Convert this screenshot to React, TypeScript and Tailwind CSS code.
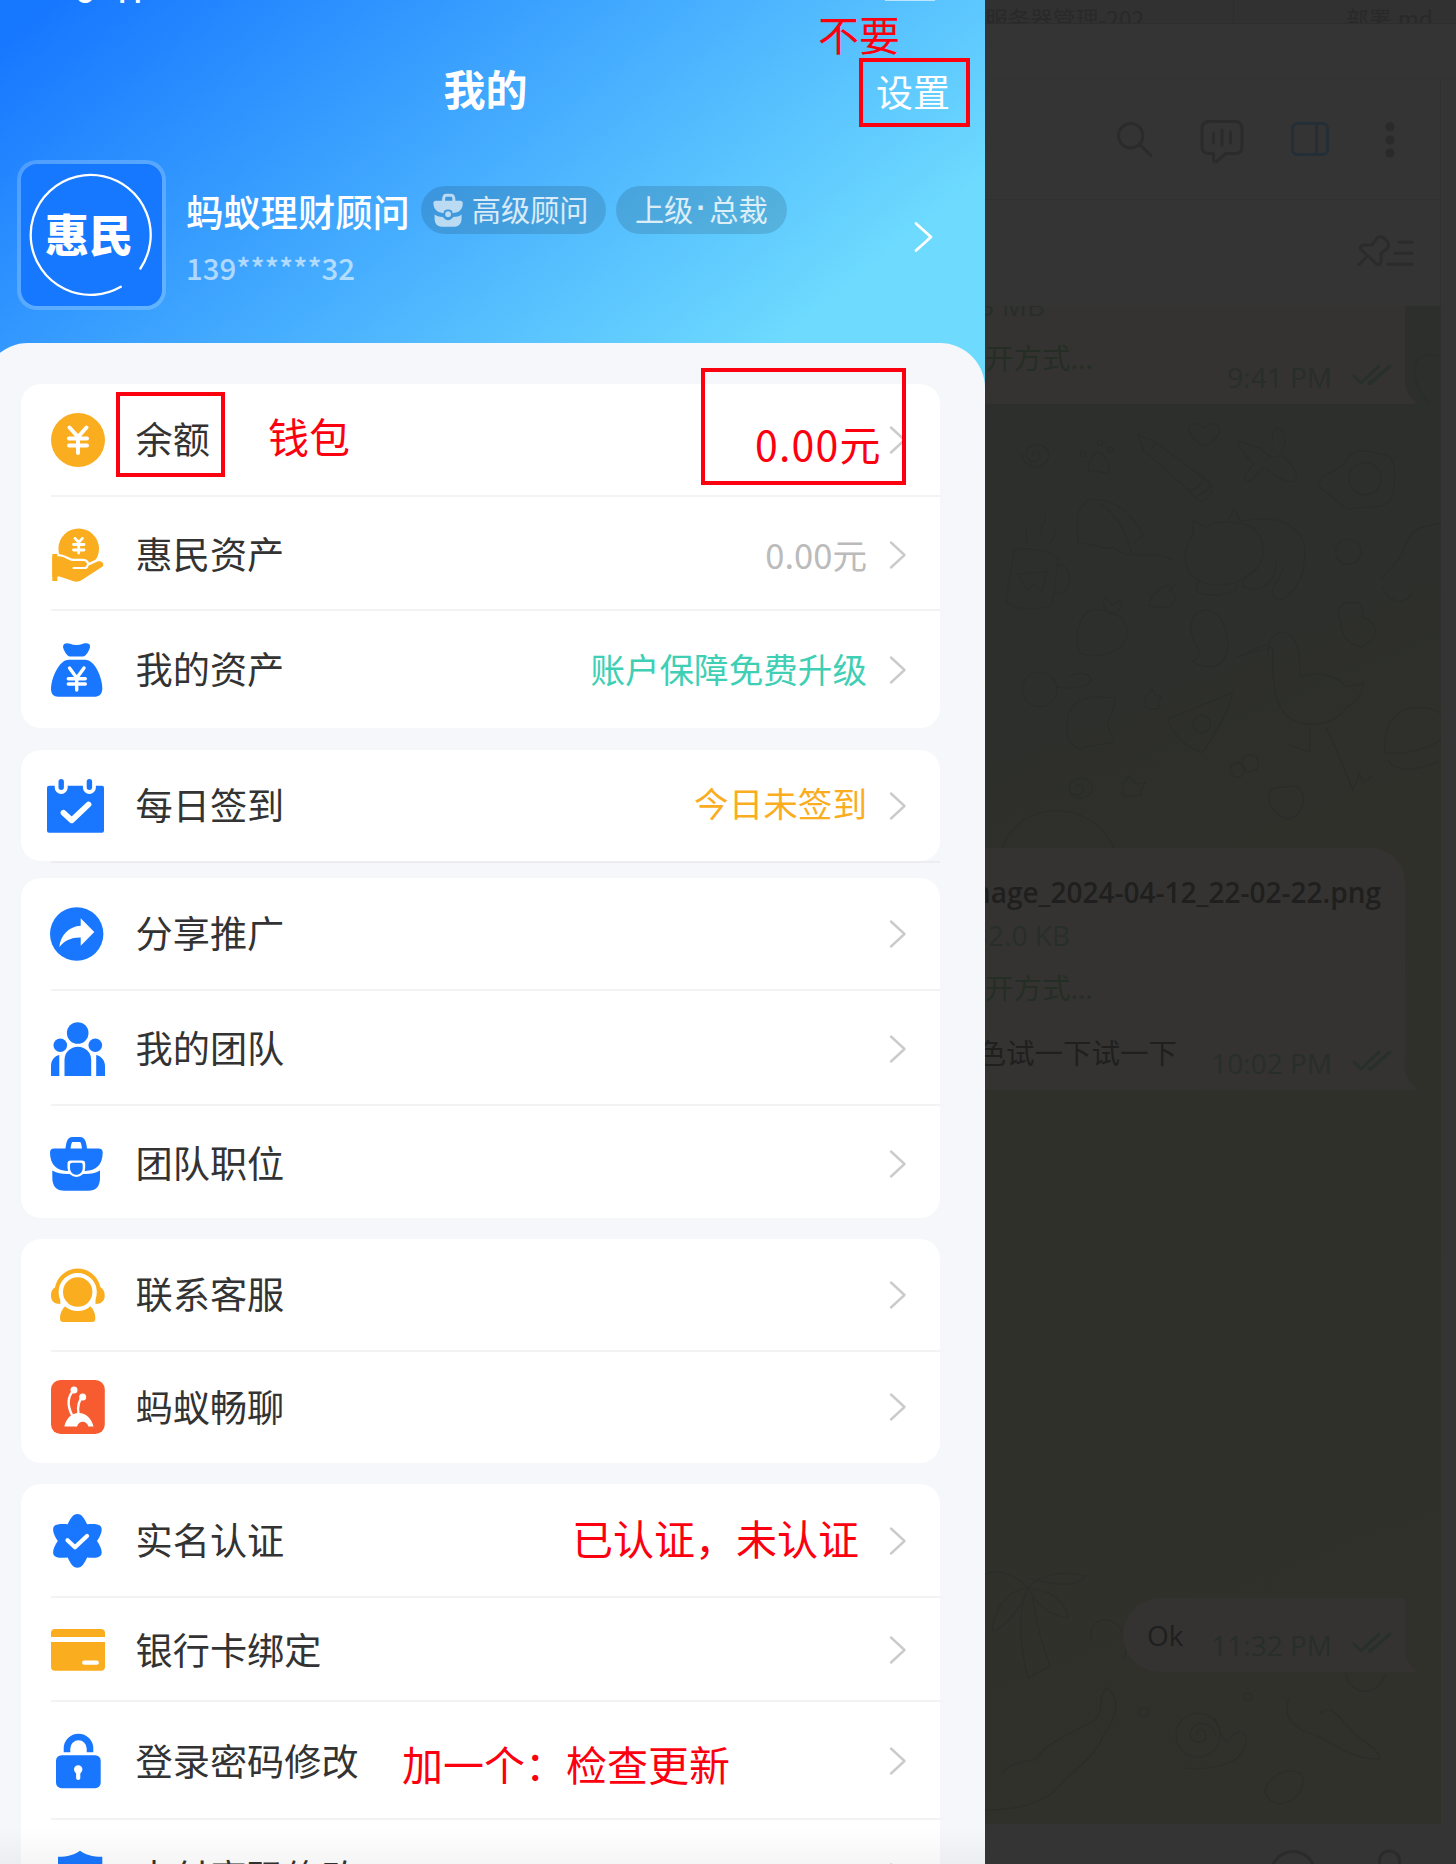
import type { ReactNode } from "react";

const BLUE = "#1977ff";
const AMBER = "#faad1e";
const cjk = "font-['Noto_Sans_CJK_SC',sans-serif]";

function Glyph({ children }: { children: ReactNode }) {
  return (
    <svg width="60" height="60" viewBox="0 0 60 60" fill="none" strokeLinecap="round" strokeLinejoin="round" className="shrink-0">
      {children}
    </svg>
  );
}

const icons: Record<string, ReactNode> = {
  yen: (
    <Glyph>
      <circle cx="31" cy="30" r="27" fill={AMBER} />
      <path d="M22.5 17.5 31 27l8.5-9.5M31 27v16M22 28.6h18M22 35.4h18" stroke="#fff" strokeWidth="4" />
    </Glyph>
  ),
  hand: (
    <Glyph>
      <circle cx="31.7" cy="23.8" r="20.3" fill={AMBER} />
      <path d="M28 13.4l3.7 4 3.7-4M31.7 17.5V28M26.5 19.5h10.5M26.5 25h10.5" stroke="#fff" strokeWidth="2.8" />
      <path d="M5.3 31.2h6C17 31 21 35.400 26 36h10c3 0 4.500 2 4.300 5.200L50 36.700c3-1.500 7.500.5 6 4-.4 1-1.200 1.500-2.300 2L34 55.600c-2 1.200-5 1.400-8 .4L12.500 51.400 5.300 51.500z" stroke="#fff" strokeWidth="4.600" />
      <path d="M5.3 31.2h6C17 31 21 35.400 26 36h10c3 0 4.500 2 4.300 5.200L50 36.700c3-1.500 7.500.5 6 4-.4 1-1.200 1.500-2.300 2L34 55.600c-2 1.200-5 1.400-8 .4L12.500 51.400 5.300 51.500z" fill={AMBER} />
      <path d="M5.300 29h5v27h-5z" fill={AMBER} />
      <path d="M26.500 43h11c1.700 0 2.700-1 2.900-2.500" stroke="#fff" strokeWidth="2" />
    </Glyph>
  ),
  bag: (
    <Glyph>
      <path d="M16 7c0-4 4-4.200 7-3.200 4 1.600 9 1.600 13 0 3.500-1 7.500-.5 7 3.200-.4 3-4 9.500-7 9.500H23C20 16.500 16.500 10 16 7z" fill={BLUE} />
      <path d="M22 19.800h16c10 0 17.300 18 17.300 29 0 5-3 7.900-7 7.900H11c-4.500 0-7-2.700-7-7.900 0-9.500 7.500-29 18-29z" fill={BLUE} />
      <path d="M22.500 28l7.300 10 7.200-10M29.700 38v12M21.300 38.800h17M21.300 44h17" stroke="#fff" strokeWidth="3.400" />
    </Glyph>
  ),
  calendar: (
    <Glyph>
      <rect x="0" y="9.700" width="57" height="47" rx="2" fill={BLUE} />
      <path d="M14.200 4v7.500M42.400 4v7.500" stroke="#fff" strokeWidth="13" />
      <path d="M14.200 5.800v5.500M42.400 5.800v5.500" stroke={BLUE} strokeWidth="5.400" />
      <path d="M16.500 36.800l8.200 7.500L41.500 28.500" stroke="#fff" strokeWidth="5.800" />
    </Glyph>
  ),
  share: (
    <Glyph>
      <circle cx="29.700" cy="30" r="26.700" fill={BLUE} />
      <path d="M33.700 14.200L47.300 28 33.700 41.700v-8.200c-9-.3-16.500 3-21.400 9.800C13.500 31 22 22.500 33.700 21.800z" fill="#fff" />
    </Glyph>
  ),
  team: (
    <Glyph>
      <g fill={BLUE}>
        <circle cx="30.700" cy="14" r="10.800" />
        <circle cx="13.300" cy="26.200" r="6.800" />
        <circle cx="48.300" cy="26.200" r="6.800" />
        <path d="M17.500 57V41a13.300 13.300 0 0 1 26.700 0v16zM4 57V47c0-5.500 3.500-10 8.300-11V57zM49.200 57V36C54 37 58 41.500 58 47v10z" />
      </g>
    </Glyph>
  ),
  briefcase: (
    <Glyph>
      <path d="M20.800 15.500c1-7 1.600-10 4.600-10h7.600c3 0 3.800 3 4.600 10" stroke={BLUE} strokeWidth="5" />
      <path d="M3 18.500c0-2.500 1.500-4 4-4h44.700c2.500 0 4 1.500 4 4C55.700 31 49 36.500 38 37H20C10 36.500 3 31 3 18.500z" fill={BLUE} />
      <path d="M5.300 36.500c5 2.600 9 3.400 15 3.600h18c6-.2 10-1 14.700-3.600v7c0 9-4 13.200-12 13.200H17.500c-8 0-12.200-4.200-12.200-13.200z" fill={BLUE} />
      <path d="M23.500 29h11.400c.5 0 .8.300.8.800V34c0 4-3 6.500-6.300 6.500S23 38 23 34v-4.200c0-.5.200-.8.500-.8z" fill="#fff" stroke="#fff" strokeWidth="5" />
      <path d="M25.500 28.700h8c1.500 0 2.200.8 2.200 2.200V34c0 4-3 6.800-6.300 6.800S23 38 23 34v-3.100c0-1.400.9-2.200 2.500-2.200z" fill={BLUE} />
    </Glyph>
  ),
  headset: (
    <Glyph>
      <path d="M10.500 23a20.500 20.500 0 0 1 40.400 0" stroke={AMBER} strokeWidth="5" />
      <path d="M13.300 20.500V39C7 39 4 36 4 30.500S7 21.500 13.300 20.500zM48.500 20.500c6.200 1 9.200 4.500 9.200 10S54.500 39 48.500 39z" fill={AMBER} />
      <path d="M19 40.500h23.500c4 3.500 5.800 7.500 5.800 12.500 0 3-1 4-3.500 4H16.500c-2.500 0-3.500-1-3.500-4 0-5 2-9 6-12.500z" fill={AMBER} />
      <circle cx="30.700" cy="27" r="16.900" fill={AMBER} stroke="#fff" strokeWidth="4.400" />
    </Glyph>
  ),
  ant: (
    <Glyph>
      <rect x="4" y="3" width="53.800" height="54" rx="9.500" fill="#f75c30" />
      <path d="M27 13c-6 6-7 15-2 25M35.700 20c-4.500 4-5.500 9-4.200 17" stroke="#fff" strokeWidth="2.400" />
      <circle cx="27" cy="13" r="3.500" fill="#fff" />
      <circle cx="35.700" cy="20" r="3.500" fill="#fff" />
      <path d="M17.300 49.400c2-8 7-13.400 14.500-13.400s13 6 14.700 13.400h-5.200c-1.600-6.200-9.600-6.200-11.200 0z" fill="#fff" />
    </Glyph>
  ),
  badge: (
    <Glyph>
      <path d="M30.400 3c4.500 0 7.300 5 9.700 10.300 7-.6 13.400-.4 14.400 3.600.9 4-1.600 8.600-4.500 13 2.900 4.400 5.400 9 4.500 13-1 4-7.400 4.200-14.400 3.600C37.700 51.800 34.900 56.800 30.400 56.800S23.100 51.800 20.700 46.500C13.700 47.100 7.300 46.900 6.300 42.900c-.9-4 1.600-8.600 4.500-13-2.900-4.400-5.400-9-4.500-13 1-4 7.400-4.200 14.400-3.600C23.100 8 25.900 3 30.400 3z" fill={BLUE} />
      <path d="M20.500 29.200l7.500 7 12-11.200" stroke="#fff" strokeWidth="4.200" />
    </Glyph>
  ),
  card: (
    <Glyph>
      <path d="M4 17v-4c0-2.500 1.500-4 4-4h46c2.500 0 4 1.500 4 4v4zM4 22h54v24.700c0 2.500-1.500 4-4 4H8c-2.500 0-4-1.500-4-4z" fill={AMBER} />
      <path d="M37.200 42.700h12.600" stroke="#fff" strokeWidth="4.200" />
    </Glyph>
  ),
  lock: (
    <Glyph>
      <path d="M20 21.200V17.500a11.500 11.500 0 0 1 23 0v3.700" stroke={BLUE} strokeWidth="6.600" strokeLinecap="butt" />
      <rect x="9" y="24.200" width="44.700" height="33" rx="5.500" fill={BLUE} />
      <circle cx="31.200" cy="38.500" r="4.200" fill="#fff" />
      <path d="M31.200 39v8" stroke="#fff" strokeWidth="4.200" />
    </Glyph>
  ),
  shield: (
    <Glyph>
      <path d="M33 3.700C39 8 45 9.700 55.300 9.700V32c0 12-9 19-22.300 25C20 51 11 44 11 32V9.700C21 9.700 27 8 33 3.700z" fill={BLUE} />
    </Glyph>
  ),
};

function Chevron() {
  return (
    <svg width="18" height="30" viewBox="0 0 18 30" fill="none" className="shrink-0">
      <path d="M2 2.500L15.500 15 2 27.500" stroke="#cbcbcb" strokeWidth="2.400" strokeLinecap="round" strokeLinejoin="round" />
    </svg>
  );
}

type RowProps = { icon: string; label: string; size: string; value?: string; tone?: string; divider?: boolean };

function Row({ icon, label, size, value, tone = "", divider }: RowProps) {
  return (
    <div className={`relative flex items-center pl-[26.500px] pr-[33px] ${size}`}>
      {icons[icon]}
      <span className="ml-[28.500px] pb-px text-[37.200px] leading-none whitespace-nowrap text-[#333]">{label}</span>
      <span className={`mr-[22px] ml-auto text-[34.600px] leading-none whitespace-nowrap ${tone}`}>{value}</span>
      <Chevron />
      {divider && <span className="absolute right-[-1px] bottom-0 left-[30px] h-[2px] bg-[#f3f3f4]" />}
    </div>
  );
}

function Card({ children, className = "" }: { children: ReactNode; className?: string }) {
  return <section className={`rounded-[20px] bg-white ${className}`}>{children}</section>;
}

function PhoneHeader() {
  return (
    <header className="relative h-[400px] overflow-hidden bg-[linear-gradient(141deg,#1677ff_30px,#6ddafe_757px)] text-white">
      <div className="absolute top-[-28px] left-[75px] font-['Inter',sans-serif] text-[34px] leading-[38px] font-medium">9:41</div>
      <div className="absolute top-0 left-[885px] h-px w-[50px] bg-white/60" />
      <div className="grid h-[160px] grid-cols-[1fr_auto_1fr] items-start pt-[67px] pr-[49px] pl-[35px]">
        <span />
        <h1 className="text-[42px] leading-[42px] font-bold">我的</h1>
        <span className="-mr-[14px] justify-self-end pt-[6px] text-[37px] leading-[37px]">设置</span>
      </div>
      <div className="flex pl-[16.500px]">
        <div className="flex h-[150px] w-[149px] items-center justify-center rounded-[20px] border-4 border-white/20 bg-[#1677ff] bg-clip-padding">
          <svg width="141" height="142" viewBox="0 0 141 142" fill="none" className="absolute">
            <path d="M119.400 104.500A60 60 0 1 0 99.800 122.800" stroke="#fff" strokeWidth="2.300" strokeLinecap="round" />
          </svg>
          <span className="pr-[4px] pb-[5px] text-[44px] leading-none font-black">惠民</span>
        </div>
        <div className="ml-[20.500px] pt-[26px]">
          <div className="flex items-center">
            <span className="pt-[3px] text-[37.300px] leading-[45px] font-medium">蚂蚁理财顾问</span>
            <div className="ml-[11px] flex h-[48px] w-[185px] items-center rounded-full bg-black/[0.13] pl-[10px] text-white/80">
              <svg width="36" height="36" viewBox="0 0 60 60" fill="none" className="opacity-65">
                <path d="M21 15c0-7 .8-9.400 4-9.400h9c3.200 0 4.200 2.400 4.200 9.400" stroke="#fff" strokeWidth="5" />
                <path d="M4 18.500c0-2.500 1.500-4 4-4h41c2.500 0 4 1.500 4 4C53 29 47 35 36 35.300c0-4-2-6-7.500-6s-7.500 2-7.500 6C11 35 4 29 4 18.500z" fill="#fff" />
                <path d="M6 37.500c5 3.200 9 4 14 4.200 2 3.300 5 5.300 8.500 5.300s6.500-2 8.500-5.300c6-.2 10-1 14-4.200v6c0 9-4 14.500-12 14.500H18c-8 0-12-5.500-12-14.500z" fill="#fff" />
                <circle cx="28.500" cy="37" r="4.800" fill="#fff" />
              </svg>
              <span className="ml-[5px] pb-[2px] text-[29.200px] leading-none whitespace-nowrap">高级顾问</span>
            </div>
            <div className="ml-[10px] flex h-[48px] w-[171px] items-center justify-center rounded-full bg-black/[0.13] pb-[2px] text-[29.200px] leading-none text-white/80">
              <span>上级</span>
              <span className="w-[16px] text-center font-['Liberation_Sans',sans-serif] font-bold">·</span>
              <span>总裁</span>
            </div>
          </div>
          <div className="mt-[16px] text-[29.400px] leading-[34px] font-medium text-white/60">139******32</div>
        </div>
        <svg width="22" height="34" viewBox="0 0 22 34" fill="none" className="mt-[60px] mr-[50px] ml-auto">
          <path d="M3 3.500L18 17 3 30.500" stroke="#fff" strokeWidth="2.800" strokeLinecap="round" strokeLinejoin="round" />
        </svg>
      </div>
    </header>
  );
}

function Phone() {
  return (
    <main className={`relative h-[1864px] w-[985px] shrink-0 overflow-hidden bg-[#f5f7fb] ${cjk}`}>
      <PhoneHeader />
      <div className="relative -mt-[57px] -ml-[17px] flex flex-col rounded-t-[45px] bg-[#f5f7fb] pt-[41px] pr-[45px] pl-[37.500px]">
        <Card>
          <Row icon="yen" label="余额" size="h-[113px] pb-[2px]" divider />
          <Row icon="hand" label="惠民资产" value="0.00元" tone="text-[#bbb]" size="h-[114px] pt-px" divider />
          <Row icon="bag" label="我的资产" value="账户保障免费升级" tone="pb-[3px] text-[#3fcfb4]" size="h-[117px]" />
        </Card>
        <Card className="mt-[22px]">
          <Row icon="calendar" label="每日签到" value="今日未签到" tone="pb-[7px] text-[#faad1e]" size="h-[111px]" />
        </Card>
        <div className="ml-[30px] h-[2px] bg-[#ededf0]" />
        <Card className="mt-[15px]">
          <Row icon="share" label="分享推广" size="h-[113px] pb-[2px]" divider />
          <Row icon="team" label="我的团队" size="h-[115px]" divider />
          <Row icon="briefcase" label="团队职位" size="h-[112px] pt-[3px]" />
        </Card>
        <Card className="mt-[21px]">
          <Row icon="headset" label="联系客服" size="h-[113px] pb-[2px]" divider />
          <Row icon="ant" label="蚂蚁畅聊" size="h-[111px] pb-px" />
        </Card>
        <Card className="mt-[21px]">
          <Row icon="badge" label="实名认证" size="h-[114px] pb-px" divider />
          <Row icon="card" label="银行卡绑定" size="h-[104px]" divider />
          <Row icon="lock" label="登录密码修改" size="h-[118px]" divider />
          <Row icon="shield" label="支付密码修改" size="h-[114px]" />
        </Card>
      </div>
      <div className="absolute inset-x-0 bottom-0 h-[36px] bg-linear-to-b from-transparent to-black/[0.04]" />
    </main>
  );
}

function Ticks() {
  return (
    <svg width="40" height="24" viewBox="0 0 40 24" fill="none" stroke="#27302b" strokeWidth="3" strokeLinecap="round" strokeLinejoin="round">
      <path d="M2 13l7 7L27 3M18 20.500L38 3M17 19l2 1.500" />
    </svg>
  );
}

function Stamp({ time, className = "bottom-[12px]" }: { time: string; className?: string }) {
  return (
    <div className={`absolute right-[13px] flex items-center text-[28px] leading-[30px] whitespace-nowrap text-[#282e2b] ${className}`}>
      <span className="mr-[20px]">{time}</span>
      <span className="mb-[4px]">
        <Ticks />
      </span>
    </div>
  );
}

function Tail() {
  return (
    <svg width="15" height="32" viewBox="0 0 15 32" className="absolute right-[-14px] bottom-0">
      <path d="M0 0C0 16 4 26 14.500 31c-3 1-8 1-14.500 1z" fill="#343331" />
    </svg>
  );
}

/* Wallpaper line drawings: desk objects, animals and fruit. */
function Doodles() {
  return (
    <svg width="456" height="1518" viewBox="985 306 456 1518" fill="none" stroke="#2b2d29" strokeWidth="1.200" className="absolute inset-0">
      <g transform="translate(985 400) scale(.33333)" stroke="#2a2c2a" strokeWidth="3.400">
        <path d="M145 165c-8-14 22-16 20 6-4 22-44 18-42-10 4-36 70-34 68 4-2 50-82 46-80-6" />
        <path d="M312 215c-6-20 4-30 14-54 18-8 26-2 34 10 4 16 16 26 14 40-20 18-30-6-62 4z" />
        <circle cx="294" cy="162" r="8" />
        <circle cx="376" cy="150" r="8" />
        <circle cx="345" cy="128" r="8" />
        <path d="M458 104l52 22 160 118c24 20 8 44-14 58-18 0-30-10-42-28L475 150zM500 150l14-26M610 270c26 0 44-20 44-46M630 290c30-8 44-26 44-40" />
        <path d="M660 138c-80-40-46-90-4-54 50-40 74 20 4 54zM758 124c30 4 50 20 68 20 16 20 40 40 60 20 20 16 50 40 50 76-30 20-70-20-96-36-20 0-34 50-56 38-16-10 14-40 24-50-20-20-44-40-50-68zM862 130c-4-60 36-60 38-10 0 20-6 28-14 34" />
        <path d="M1000 260c8-50 60-40 80-74 40-60 90-20 130-20 30 30 20 120 0 142-30 20-70 10-120 20-30-14-40-38-90-68z" />
        <circle cx="1140" cy="236" r="48" />
        <path d="M280 430c-10-80 0-110 32-132 90-4 130 50 164 108l-30 22M350 312c50 40 70 80 92 154M276 430c50-6 70 26 110 10 40 50 110 0 180 42" />
        <path d="M88 450l-26 150c20 34 120 32 140 10l18-134c-20-26-100-36-132-26zM218 494c50-4 50 100-12 86M96 522l90-8-14 60-26-20-20 16zM124 430c10-20-10-30 0-40M170 400c-10-26 20-30 8-56M192 430c20-10 14-30 18-50" />
        <path d="M624 404V362l38 20c40-22 90-20 140 0 60 50 40 170-100 172-90 0-130-70-78-150zM730 362l18-34 18 36c150-30 210 40 190 130-4 70-80 140-94 84 0-30 30-50 34-80M640 546c-30 40 40 50 114 26v-24M820 500c-20 20-60 30-44 60 50 20 100-10 98-84" />
        <path d="M284 760c-20-60 0-130 50-132 50 0 100 30 92 80-10 50-90 70-142 52zM358 590c-10 30 10 50 26 54 20-10 30-30 24-44l-26 16zM490 616c14-40 40-60 64-58 30 40 20 80-64 58zM550 575l24-26" />
        <path d="M618 690c-4-70 70-80 96-20 30 70 10 130-40 130-30-2-44-10-52-16 30-10 20-40 10-50-10-20-14-30-14-44z" />
        <path d="M850 770c-10-90 80-100 92-10l4 70c60-20 110 0 140 30l50-10c-10 40-20 60-50 70-40 70-170 70-200 0-30-60-20-120-24-180l-106 32 102-46M974 980v76l-60-20M1024 980l80 190 20-50 10 30 30-24" />
        <circle cx="164" cy="868" r="52" />
        <path d="M250 940c30-60 90-50 140-46 0 60-40 60-10 110 30 40-60 20-96 44-50-20-40-70-34-108zM215 860c40 10 100 0 104-20-10-30-60-20-64-8M548 958l194-80c-10 60-50 120-90 180-50-20-80-40-104-100z" />
        <circle cx="650" cy="972" r="26" />
        <circle cx="795" cy="1090" r="26" />
        <circle cx="758" cy="1110" r="22" />
        <path d="M478 920l4-30 20-24 8 20 20 2-12 22 8 14-24 4zM410 1180l4-30 20-24 18 26 30-4-16 24 4 14-50 4zM275 1165c-8-14 22-16 20 6-4 22-44 18-42-10 4-36 70-34 68 4-2 40-62 36-70 6" />
        <path d="M50 1344c60-150 270-150 336 0M850 1190c0-30 40-30 60-30 60-20 60 90 0 96-30 0-60-40-60-66zM1066 660c-20-30 10-60 30-50 40-10 40 20 34 40 50 20 60 60 0 92-50-10-60-40-64-82zM1200 1060c-10-160 120-150 168-120M1200 1060c50 0 100 0 168-40M1210 1080c20 40 100 30 150 4M1190 540c10-30 50-40 70-100 20-60 50-60 108-70M1190 560c30 60 80 50 90 20" />
        <circle cx="1090" cy="455" r="38" />
      </g>
      <path d="M1028 1588c-12-14-30-20-43-14M1028 1588c12-14 34-18 58-12-10 12-30 10-58 2M1028 1588c-20 2-34 20-36 44 14-6 30-24 36-44zM1028 1588c24 2 38 14 40 30-14-2-30-10-40-30M1026 1590c-8 30-6 56 2 88l22-12c-8-20-14-44-18-72" />
      <path d="M985 1810c30 0 60-6 76-26 20-20 34-28 42-48 14-18 18-38 4-48-10 6-2 24-12 32-20 12-46 20-60 40-16 2-26 4-34 14" />
      <circle cx="1198" cy="1735" r="22" />
      <path d="M1198 1735c-4-6 6-8 8 0 0 10-16 10-16-2 4-14 24-12 26 4M1184 1768c20 2 58 0 62-26 2-14-12-12-18 0-8-2-10-22-14-24M1290 1697c-8 16 0 32 26 38 20 10 34 24 64 24-2-12-18-16-30-30-12-14-18-24-30-16M1265 1790c6-16 22-24 36-16 6 10-2 24-14 28-10 4-20 0-22-12z" />
      <circle cx="1144" cy="1712" r="5" />
      <circle cx="1248" cy="1697" r="4" />
      <path d="M1092 1640c-4-12 4-22 16-20 14 4 22 20 16 40M1346 1672c0 20 28 30 40 2M1414 370c0-14 16-18 24-14M1414 370c2 16 8 24 14 34" />
    </svg>
  );
}

function ChatBackdrop() {
  return (
    <aside className="flex h-[1864px] min-w-0 flex-1 flex-col overflow-hidden bg-[#343434] font-['Open_Sans','Noto_Sans_CJK_SC',sans-serif]">
      <div className="flex h-[24px] overflow-hidden border-b border-[#2d2d2d] bg-[#313131] font-['Noto_Sans_CJK_SC',sans-serif] text-[22.700px] leading-[38px] whitespace-nowrap text-[#292929]">
        <span className="w-[249px] border-r border-[#2d2d2d]">服务器管理-202</span>
        <span className="ml-[112px]">部署.md</span>
      </div>
      <div className="h-[55px] border-b border-[#323232]" />
      <div className="mr-[15px] flex h-[121px] border-r border-b border-[#303030]">
        <svg width="455" height="120" viewBox="985 79 455 120" fill="none" stroke="#2b2b2b" strokeWidth="3" strokeLinecap="round" strokeLinejoin="round">
          <circle cx="1130.700" cy="135.700" r="12.200" />
          <path d="M1140 145l11 10.500" />
          <path d="M1209 121.500h26q7 0 7 7v18q0 7-7 7h-9l-9.500 8q-3 1-3-2v-6h-4.500q-7 0-7-7v-18q0-7 7-7zM1213.500 133v10M1222 130v15M1230.500 132v11" />
          <rect x="1292.500" y="123.500" width="35" height="31" rx="5" stroke="#242e37" />
          <path d="M1316.500 124v30" stroke="#242e37" />
          <g fill="#2a2a2a" stroke="none">
            <circle cx="1390" cy="126.700" r="4.500" />
            <circle cx="1390" cy="140" r="4.500" />
            <circle cx="1390" cy="153" r="4.500" />
          </g>
        </svg>
      </div>
      <div className="mr-[15px] flex h-[106px] items-center justify-end border-r border-[#303030] pr-[22px] pb-[4px]">
        <svg width="64" height="40" viewBox="1354 231 64 40" fill="none" stroke="#2b2b2b" strokeWidth="3" strokeLinecap="round" strokeLinejoin="round">
          <path d="M1359 264.500l8.500-8.500M1361 249.500q-2-4 3-4.500h8l5-7q4-3 8 1l2 2q3 4 0 7.500l-6 5v8q-1 5-5 2zM1399 242.300h13M1395 253.300h17M1388 264.300h24" />
        </svg>
      </div>
      <div className="relative mr-[15px] h-[1518px] overflow-hidden bg-[linear-gradient(157deg,#2c2f2d_0%,#2d2f2c_22%,#30302a_42%,#30312b_100%)]">
        <Doodles />
        <div className="relative flex flex-col">
          <div className="relative h-[98px] w-[420px] bg-[#343331] text-[28.500px] whitespace-nowrap">
            <div className="flex h-[12px] w-[60px] items-end justify-end overflow-hidden text-[28px] leading-[28px] text-[#282e2b]">
              <span className="mb-[-1px]">8.3 MB</span>
            </div>
            <div className="mt-[21px] text-[28.500px] leading-[38px] text-[#252e25]">开方式...</div>
            <Stamp time="9:41 PM" />
            <Tail />
          </div>
          <div className="relative mt-[444px] h-[242px] w-[420px] rounded-tr-[34px] bg-[#343331] text-[28.500px] whitespace-nowrap">
            <div className="flex w-[396px] justify-end overflow-hidden pt-[24px] text-[28px] leading-[40px] font-semibold text-[#1f1f1f]">image_2024-04-12_22-02-22.png</div>
            <div className="mt-[3px] flex w-[85px] justify-end overflow-hidden text-[28px] leading-[40px] text-[#282e2b]">32.0 KB</div>
            <div className="mt-[14px] leading-[38px] text-[#252e25]">开方式...</div>
            <div className="mt-[27px] flex w-[192px] justify-end overflow-hidden leading-[38px] text-[#1f1f1f]">色试一下试一下</div>
            <Stamp time="10:02 PM" />
            <Tail />
          </div>
          <div className="relative mt-[508px] ml-[138px] h-[74px] w-[282px] rounded-l-full rounded-tr-[36px] bg-[#343332]">
            <span className="block pt-[17px] pl-[24px] text-[28px] leading-[40px] text-[#1f1f1f]">Ok</span>
            <Stamp time="11:32 PM" />
            <Tail />
          </div>
        </div>
      </div>
      <div className="flex h-[40px] overflow-hidden">
        <svg width="455" height="40" viewBox="985 1824 455 40" fill="none" stroke="#2b2b2b" strokeWidth="3">
          <circle cx="1293" cy="1873.500" r="22" />
          <rect x="1379.500" y="1851" width="20" height="36" rx="10" />
        </svg>
      </div>
    </aside>
  );
}

/* Review notes laid over the screen. */
function Notes() {
  const note = "absolute whitespace-nowrap text-[41px] leading-[42px] text-[#fd0010]";
  const box = "absolute border-4 border-[#fd0010]";
  return (
    <div className={cjk}>
      <span className={`${note} top-[12px] left-[818px]`}>不要</span>
      <div className={`${box} top-[58px] left-[859px] h-[69px] w-[111px]`} />
      <div className={`${box} top-[392px] left-[116px] h-[85px] w-[109px]`} />
      <span className={`${note} top-[414px] left-[268px]`}>钱包</span>
      <div className={`${box} top-[368px] left-[701px] h-[117px] w-[205px]`} />
      <span className={`${note} top-[422px] left-[755px]`}>
        <span className="tracking-[1.200px]">0.00</span>元
      </span>
      <span className={`${note} top-[1516px] left-[572px]`}>已认证，未认证</span>
      <span className={`${note} top-[1742px] left-[402px]`}>加一个：检查更新</span>
    </div>
  );
}

export default function App() {
  return (
    <div className="relative flex h-[1864px] w-[1456px] overflow-hidden bg-[#343434]">
      <Phone />
      <ChatBackdrop />
      <Notes />
    </div>
  );
}
